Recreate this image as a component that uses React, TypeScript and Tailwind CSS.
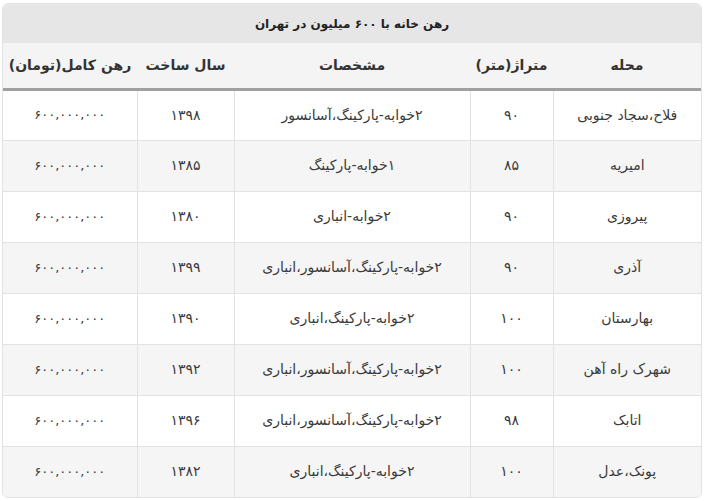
const rows = [
  ['فلاح،سجاد جنوبی', '۹۰', '۲خوابه-پارکینگ،آسانسور', '۱۳۹۸'],
  ['امیریه', '۸۵', '۱خوابه-پارکینگ', '۱۳۸۵'],
  ['پیروزی', '۹۰', '۲خوابه-انباری', '۱۳۸۰'],
  ['آذری', '۹۰', '۲خوابه-پارکینگ،آسانسور،انباری', '۱۳۹۹'],
  ['بهارستان', '۱۰۰', '۲خوابه-پارکینگ،انباری', '۱۳۹۰'],
  ['شهرک راه آهن', '۱۰۰', '۲خوابه-پارکینگ،آسانسور،انباری', '۱۳۹۲'],
  ['اتابک', '۹۸', '۲خوابه-پارکینگ،آسانسور،انباری', '۱۳۹۶'],
  ['پونک،عدل', '۱۰۰', '۲خوابه-پارکینگ،انباری', '۱۳۸۲'],
]

export default function App() {
  return (
    <div className="bg-white w-[704px] h-[501px] px-[2px] pt-[3px]" style={{ fontFamily: '"DejaVu Sans", "Noto Sans", sans-serif' }}>
      <div dir="rtl" className="rounded-md overflow-hidden border border-[#e2e2e2] text-[#333]">
        {/* Caption */}
        <div className="h-[39px] bg-[#e6e6e6] flex items-center justify-center text-[12px] font-bold text-[#222]">
          رهن خانه با ۶۰۰ میلیون در تهران
        </div>

        <table className="w-full table-fixed border-collapse">
          <thead>
            <tr className="bg-[#f4f4f4] h-[46px] border-b-[3px] border-[#a0a0a0] text-[14px] font-bold text-[#333]">
              <th className="w-[148px] font-bold">محله</th>
              <th className="w-[83px] font-bold">متراژ(متر)</th>
              <th className="w-[236px] font-bold">مشخصات</th>
              <th className="w-[97px] font-bold">سال ساخت</th>
              <th className="font-bold">رهن کامل(تومان)</th>
            </tr>
          </thead>
          <tbody>
            {rows.map((r, i) => (
              <tr
                key={i}
                className={`h-[51px] text-[14px] text-center text-[#3a3a3a] ${i % 2 === 1 ? 'bg-[#f5f5f5]' : 'bg-white'} ${i < rows.length - 1 ? 'border-b border-[#e2e2e2]' : ''}`}
              >
                <td className="border-l border-[#e2e2e2]">{r[0]}</td>
                <td className="border-l border-[#e2e2e2]">{r[1]}</td>
                <td className="border-l border-[#e2e2e2]">{r[2]}</td>
                <td className="border-l border-[#e2e2e2]">{r[3]}</td>
                <td className="text-[13px]">۶۰۰,۰۰۰,۰۰۰</td>
              </tr>
            ))}
          </tbody>
        </table>
      </div>
    </div>
  )
}
